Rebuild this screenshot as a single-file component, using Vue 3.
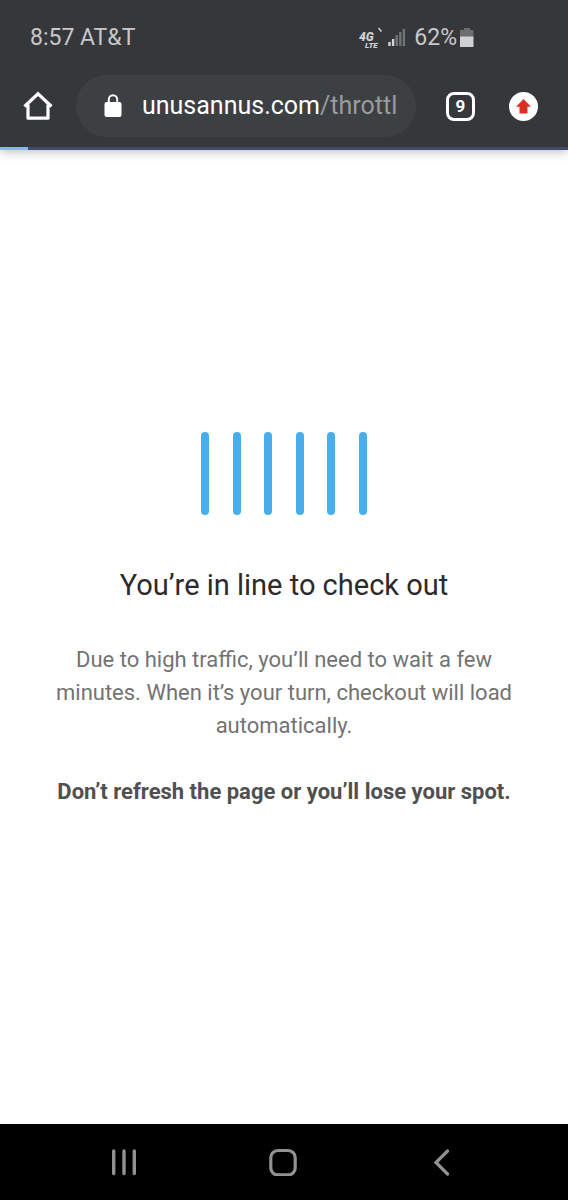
<template>
  <div class="screen">
    <header class="browser">
      <div class="status">
        <span>{{ clock }} {{ carrier }}</span>
        <div class="status-right">
          <svg class="network" width="24" height="24" viewBox="0 0 24 24" role="img" aria-label="4G LTE">
            <text x="0" y="15" class="network-4g">4G<tspan x="6" y="22" class="network-lte">LTE</tspan></text>
            <path d="M19.500 2l3 3.500" stroke="#d0d0d2" stroke-width="1.5" />
          </svg>
          <svg class="signal" width="18" height="20" viewBox="0 0 18 20" aria-hidden="true">
            <rect
              v-for="n in 5"
              :key="n"
              :x="(n - 1) * 3.6 + 0.3"
              :y="18 - signalHeights[n - 1]"
              width="2.4"
              :height="signalHeights[n - 1]"
              :fill="n <= signal ? '#d6d6d8' : '#737477'"
            />
          </svg>
          <span>{{ battery }}%</span>
          <svg class="battery" width="14" height="20" viewBox="0 0 14 20" aria-hidden="true">
            <path d="M4 0h6v2h3.5v7H0V2h4z" fill="#6c6d70" />
            <path d="M0 8.5h13.5v10.5H0z" fill="#d0d1d2" />
          </svg>
        </div>
      </div>

      <div class="toolbar">
        <button type="button" class="home" aria-label="Home">
          <svg width="30" height="30" viewBox="0 0 30 30" fill="none" stroke="#fff" stroke-width="3.2" stroke-linejoin="round">
            <path d="M1.500 15.500L15 2.800L28.500 15.500" stroke-linejoin="miter" />
            <path d="M5 13.500V27.200H25V13.500" />
          </svg>
        </button>
        <button type="button" class="address">
          <svg width="18" height="24" viewBox="0 0 18 24" aria-hidden="true">
            <rect x="0.500" y="8" width="17" height="15" rx="2" fill="#fff" />
            <path d="M4.800 9V5.500a4.200 4.200 0 0 1 8.400 0V9" fill="none" stroke="#fff" stroke-width="2" />
          </svg>
          <span class="url">{{ host }}<span class="path">{{ path }}</span></span>
        </button>
        <button type="button" class="tabs" aria-label="Open tabs">{{ tabCount }}</button>
        <button type="button" class="update" aria-label="Update available">
          <svg width="17" height="17" viewBox="0 0 17 17" aria-hidden="true">
            <path d="M8.500 1L16 8.800H12.500V15.500H4.500V8.800H1z" fill="#d93025" />
          </svg>
        </button>
      </div>

      <div class="progress" role="progressbar" :aria-valuenow="loaded">
        <div class="progress-fill" :style="{ width: loaded + '%' }"></div>
      </div>
    </header>

    <main class="page">
      <div class="loader">
        <span v-for="n in 6" :key="n" class="loader-bar"></span>
      </div>
      <h1>You’re in line to check out</h1>
      <p>Due to high traffic, you’ll need to wait a few minutes. When it’s your turn, checkout will load automatically.</p>
      <p class="warning">Don’t refresh the page or you’ll lose your spot.</p>
    </main>

    <nav class="navbar">
      <button type="button" aria-label="Recent apps">
        <svg width="28" height="28" viewBox="0 0 28 28" stroke="#929292" stroke-width="3.4" stroke-linecap="round">
          <path d="M3.700 3V25.500M14 3V25.500M24.300 3V25.500" />
        </svg>
      </button>
      <button type="button" aria-label="Home screen">
        <svg width="28" height="28" viewBox="0 0 28 28" fill="none" stroke="#929292" stroke-width="3.2">
          <rect x="1.800" y="2.500" width="24.400" height="24.400" rx="7" />
        </svg>
      </button>
      <button type="button" aria-label="Back">
        <svg width="28" height="28" viewBox="0 0 28 28" fill="none" stroke="#929292" stroke-width="3.2" stroke-linecap="round">
          <path d="M19.500 3L8 14.500L19.500 26" />
        </svg>
      </button>
    </nav>
  </div>
</template>

<script setup>
import { ref } from 'vue';

// Status bar
const clock = ref('8:57');
const carrier = ref('AT&T');
const battery = ref(62);
const signal = ref(2);
const signalHeights = [4, 7, 11, 14, 17];

// Browser toolbar
const host = ref('unusannus.com');
const path = ref('/throttl');
const tabCount = ref(9);
const loaded = ref(5);
</script>

<style>
body {
  margin: 0;
}
</style>

<style scoped>
.screen {
  display: flex;
  flex-direction: column;
  min-height: 100vh;
  background: #fff;
  font-family: Roboto, "Liberation Sans", sans-serif;
}

button {
  padding: 0;
  border: 0;
  background: none;
  font-family: inherit;
  cursor: pointer;
}

svg {
  display: block;
  flex: none;
}

.browser {
  background: #36373b;
  box-shadow: 0 2px 10px rgba(0, 0, 0, 0.25);
}

.status {
  display: flex;
  justify-content: space-between;
  align-items: center;
  height: 75px;
  padding: 0 94px 0 30px;
  color: #c8c8ca;
  font-size: 23px;
}

.status-right {
  display: flex;
  align-items: center;
}

.network {
  margin-right: 5px;
}

.network-4g {
  fill: #d0d0d2;
  font-size: 12px;
  font-weight: 900;
  font-style: italic;
}

.network-lte {
  font-size: 8px;
}

.signal {
  margin-right: 8px;
}

.battery {
  margin-left: 3px;
}

.toolbar {
  display: flex;
  align-items: center;
  padding: 0 30px 10px 23px;
}

.home {
  margin-right: 23px;
}

.address {
  display: flex;
  flex: 1;
  align-items: center;
  gap: 20px;
  min-width: 0;
  height: 62px;
  margin-right: 30px;
  padding: 0 16px 0 28px;
  border-radius: 31px;
  background: #3c4043;
}

.url {
  overflow: hidden;
  color: #fff;
  font-size: 25px;
  line-height: 32px;
  white-space: nowrap;
}

.path {
  color: #9a9c9f;
}

.tabs {
  box-sizing: border-box;
  width: 29px;
  height: 29px;
  margin-right: 34px;
  border: 3px solid #fff;
  border-radius: 8px;
  color: #fff;
  font-size: 17px;
  font-weight: 700;
  line-height: 22px;
}

.update {
  display: flex;
  align-items: center;
  justify-content: center;
  width: 29px;
  height: 29px;
  border-radius: 50%;
  background: #fff;
}

.progress {
  height: 3px;
  background: #3f4a68;
}

.progress-fill {
  height: 100%;
  background: #8ab4f8;
}

.page {
  flex: 1;
  padding: 282px 44px 0;
  text-align: center;
}

.loader {
  display: flex;
  justify-content: space-between;
  width: 166px;
  height: 83px;
  margin: 0 auto 50px;
}

.loader-bar {
  width: 8px;
  border-radius: 4px;
  background: #47aeeb;
}

h1 {
  margin: 0 0 38px;
  color: #2b2b2b;
  font-size: 29px;
  font-weight: 400;
  line-height: 40px;
}

p {
  margin: 0 0 33px;
  color: #737373;
  font-size: 22px;
  line-height: 33px;
}

.warning {
  color: #505050;
  font-weight: 700;
}

.navbar {
  display: flex;
  height: 76px;
  padding: 0 46px 0 44px;
  background: #000;
}

.navbar button {
  display: flex;
  flex: 1;
  align-items: center;
  justify-content: center;
}
</style>
